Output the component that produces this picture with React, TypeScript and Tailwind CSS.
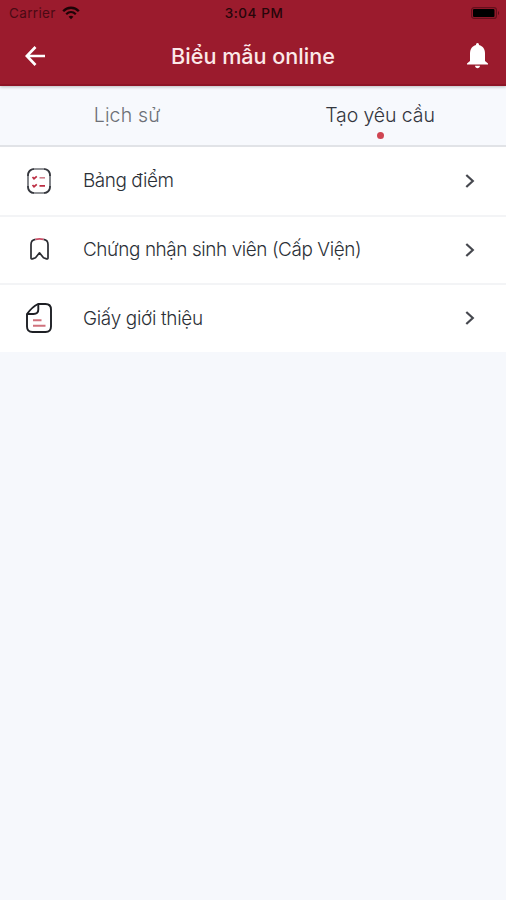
import * as React from 'react';
import clsx from 'clsx';

function StatusBar() {
  return (
    <div className="grid h-[26px] grid-cols-3 items-center text-[13.5px] leading-none text-[#26060a]">
      <div className="flex items-center gap-[6.5px] pl-[9px]">
        <span className="pt-px tracking-[0.35px] text-[#4a0a14]">Carrier</span>
        <svg width="18" height="14" viewBox="0 0 18 14" fill="none">
          <path d="M1.2 5.2C5.5 0.6 12.5 0.6 16.8 5.2" stroke="#1d0306" strokeWidth="2.4" />
          <path d="M4.2 8.3C7 5.5 11 5.5 13.8 8.3" stroke="#1d0306" strokeWidth="2.2" />
          <path d="M9 13.2L6.6 10.7C8 9.4 10 9.4 11.4 10.7Z" fill="#1d0306" />
        </svg>
      </div>
      <span className="pt-px pl-[2px] text-center font-medium tracking-[0.55px]">3:04 PM</span>
      <div className="flex justify-end pr-[6px]">
        <svg width="29" height="12" viewBox="0 0 29 12" fill="none">
          <rect x="0.6" y="0.6" width="24.8" height="10.8" rx="2.5" stroke="#650f1c" strokeWidth="1.2" />
          <rect x="2" y="2" width="21.5" height="8" rx="1" fill="#000" />
          <path d="M27 4V8C28.4 7.4 28.4 4.6 27 4Z" fill="#5a0d18" />
        </svg>
      </div>
    </div>
  );
}

function Header() {
  return (
    <header className="relative h-[86px] border-b-2 border-[#8d1426] bg-[#9b1b2d] shadow-[0_1px_3px_rgba(0,0,0,0.25)]">
      <StatusBar />
      <div className="flex h-[59px] items-center justify-between pr-[18px] pl-[25px]">
        <button type="button" aria-label="Back">
          <svg width="21" height="20" viewBox="0 0 21 20" fill="none" stroke="#fff" strokeWidth="2.7">
            <path d="M20 10H2M10.5 1L1.8 10L10.5 19" />
          </svg>
        </button>
        <h1 className="mt-[2px] mr-[7px] text-[21.6px] leading-none font-[480] text-[#fbe9e9]">Biểu mẫu online</h1>
        <button type="button" aria-label="Notifications">
          <svg width="21" height="26" viewBox="0 0 21 26" fill="#fff">
            <path d="M10.5 0C11.6 0 12 0.8 12 2C16 3 18 6.4 18 10.5V18L21 20.5V21.5H0V20.5L3 18V10.5C3 6.4 5 3 9 2C9 0.8 9.4 0 10.5 0Z" />
            <path d="M8 22.7H13C12.8 26 8.2 26 8 22.7Z" />
          </svg>
        </button>
      </div>
    </header>
  );
}

function Tab({ label, active }: { label: string; active?: boolean }) {
  return (
    <button
      type="button"
      className={clsx(
        'flex flex-col items-center pt-[17px] pl-[1px] text-[19.5px] leading-[24px] font-light',
        active ? 'tracking-[-0.1px] text-[#33363e]' : 'tracking-[0.15px] text-[#6d7077]',
      )}
    >
      {label}
      {active && <span className="mt-[4.5px] h-[7px] w-[7px] rounded-full bg-[#cf4552]" />}
    </button>
  );
}

function ChecklistIcon() {
  return (
    <svg width="24" height="26" viewBox="0 0 24 26" fill="none">
      <rect x="1" y="1" width="22" height="24" rx="6.5" stroke="#6f7177" strokeWidth="1.7" />
      <path
        d="M1 8V7C1 3.5 3.5 1 7 1M17 1C20.5 1 23 3.5 23 7V8M1 18V19C1 22.5 3.5 25 7 25M17 25C20.5 25 23 22.5 23 19V18"
        stroke="#34363c"
        strokeWidth="1.7"
      />
      <path d="M5.5 9L7 10.7L9.8 8.3M5.5 17L7 18.7L9.8 16.3M12.5 17.8H18" stroke="#bd2e43" strokeWidth="1.7" />
      <path d="M12.5 9.8H18" stroke="#cf7f8b" strokeWidth="1.6" />
    </svg>
  );
}

function BookmarkIcon() {
  return (
    <svg
      className="mb-[2px]"
      width="19"
      height="22"
      viewBox="0 0 19 22"
      fill="none"
      strokeWidth="1.7"
      strokeLinejoin="round"
    >
      <path
        d="M5.5 1.4C2.7 1.8 1 3.8 1 6.5V20C1 20.9 1.6 21.1 2.4 20.9L5.5 19.8L9.5 14.8L13.5 19.8L16.6 20.9C17.4 21.1 18 20.9 18 20V6.5C18 3.8 16.3 1.8 13.5 1.4"
        stroke="#292b31"
      />
      <path d="M5.5 1.4C7 1 12 1 13.5 1.4" stroke="#c94f67" />
    </svg>
  );
}

function DocumentIcon() {
  return (
    <svg width="26" height="30" viewBox="0 0 26 30" fill="none" strokeLinejoin="round">
      <path
        d="M12 1H19.5C23 1 25 3 25 6.5V23.5C25 27 23 29 19.5 29H6.5C3 29 1 27 1 23.5V11Q6 4 12 1Z"
        stroke="#1d1f24"
        strokeWidth="1.9"
      />
      <path d="M12.3 1.2V6.5C12.3 9.5 10.5 11 7.5 11H1.4" stroke="#1d1f24" strokeWidth="1.9" />
      <path d="M7 17.3H15.5M7 22.8H19.5" stroke="#d0717c" strokeWidth="2" />
    </svg>
  );
}

const items = [
  { label: 'Bảng điểm', icon: <ChecklistIcon />, tracking: 'tracking-[-0.42px]' },
  { label: 'Chứng nhận sinh viên (Cấp Viện)', icon: <BookmarkIcon />, tracking: 'tracking-[-0.4px]' },
  { label: 'Giấy giới thiệu', icon: <DocumentIcon />, tracking: 'tracking-[-0.3px]' },
];

export default function App() {
  return (
    <div className="flex h-[900px] w-[506px] flex-col bg-[#f6f8fc] font-[Inter,'Liberation_Sans',sans-serif]">
      <Header />
      <nav className="grid h-[61px] grid-cols-2 border-b-2 border-[#e1e3e7] bg-[#f7f9fd]">
        <Tab label="Lịch sử" />
        <Tab label="Tạo yêu cầu" active />
      </nav>
      <ul className="bg-white">
        {items.map((item, i) => (
          <li
            key={item.label}
            className={clsx(
              'flex items-center pr-[31px]',
              i === 0 && 'h-[70px] border-b-2 border-[#f3f4f6] pb-px',
              i === 1 && 'h-[68px] border-b-2 border-[#f3f4f6] pb-px',
              i === 2 && 'h-[67px] pb-px',
            )}
          >
            <span className="flex w-[78px] justify-center">{item.icon}</span>
            <span className={clsx('ml-[5px] flex-1 pt-[2px] text-[18.9px] font-light text-[#2b3037]', item.tracking)}>
              {item.label}
            </span>
            <svg width="10" height="14" viewBox="0 0 10 14" fill="none" stroke="#46484f" strokeWidth="2.2">
              <path d="M1.3 1L7.8 7L1.3 13" />
            </svg>
          </li>
        ))}
      </ul>
    </div>
  );
}
